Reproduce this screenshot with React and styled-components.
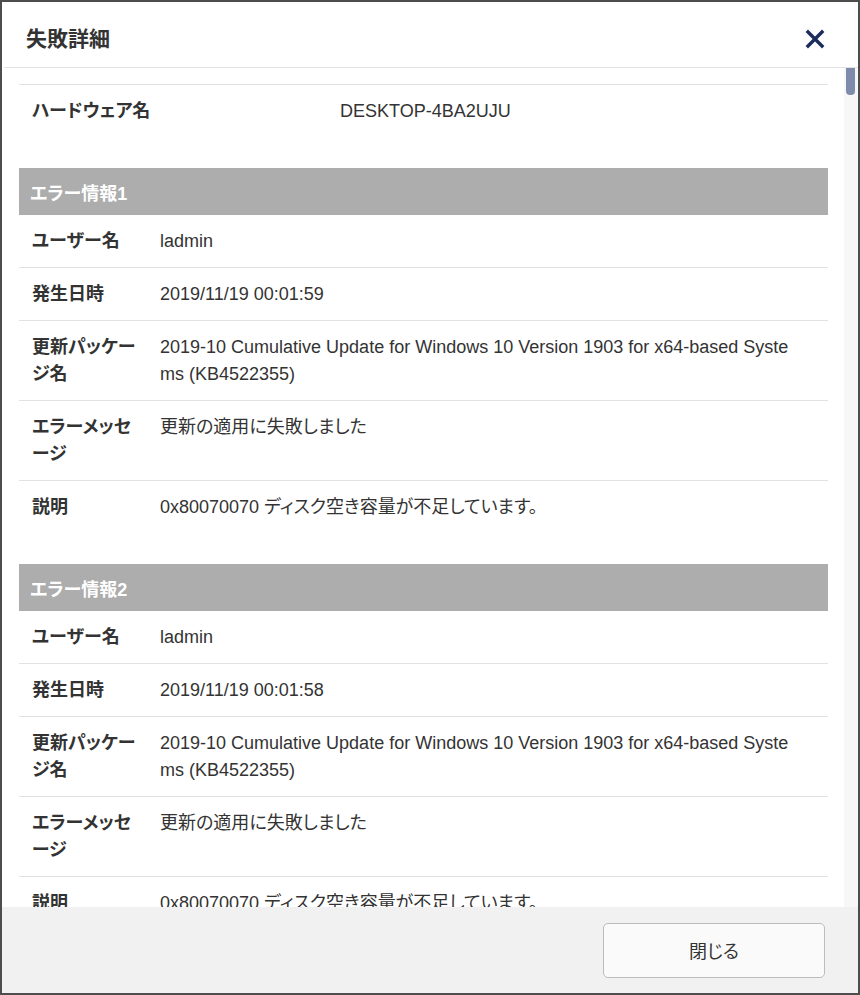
import React from 'react'
import styled, { createGlobalStyle } from 'styled-components'

const GlobalStyle = createGlobalStyle`
  html, body {
    margin: 0;
    padding: 0;
    background: #fff;
  }
  body {
    font-family: "Liberation Sans", "Noto Sans CJK JP", sans-serif;
    font-feature-settings: "palt";
    color: #333;
  }
  * { box-sizing: border-box; }
`;

const Frame = styled.div`
  width: 860px;
  height: 995px;
  border: 2px solid #4d4d4d;
  display: flex;
  flex-direction: column;
  background: #fff;
`;

const Header = styled.div`
  height: 66px;
  flex: none;
  display: flex;
  align-items: center;
  justify-content: space-between;
  padding: 0 31px 0 22px;
  margin-left: 2px;
  border-bottom: 1px solid #e3e3e3;
`;

const Title = styled.h1`
  margin: 0;
  font-size: 21px;
  font-weight: bold;
  color: #333;
  padding-top: 4px;
`;

const CloseButton = styled.button`
  border: 0;
  background: none;
  padding: 0;
  width: 24px;
  height: 24px;
  margin-top: 8px;
  cursor: pointer;
  display: flex;
  align-items: center;
  justify-content: center;
`;

const BodyWrap = styled.div`
  flex: 1;
  min-height: 0;
  display: flex;
`;

const Scroller = styled.div`
  flex: 1;
  min-width: 0;
  overflow-y: auto;
  padding: 16px 16px 0 17px;
  scrollbar-width: none;
  &::-webkit-scrollbar { display: none; }
`;

const Track = styled.div`
  flex: none;
  width: 14px;
  background: #f7f7f7;
  padding: 0 3px 0 2px;
`;

const Thumb = styled.div`
  height: 27px;
  background: #7f8bab;
  border-radius: 0 0 4px 4px;
`;

const Section = styled.section`
  margin-bottom: 31px;
`;

const SectionTitle = styled.div`
  height: 47px;
  display: flex;
  align-items: center;
  padding-left: 11px;
  background: #adadad;
  color: #fff;
  font-size: 18px;
  font-weight: bold;
`;

const Row = styled.div`
  display: flex;
  border-top: ${p => (p.$topLine ? '1px solid #e2e2e2' : '0')};
  border-bottom: ${p => (p.$last ? '0' : '1px solid #e2e2e2')};
  font-size: 18px;
  line-height: 27px;
`;

const Label = styled.div`
  flex: none;
  width: ${p => p.$width}px;
  padding: 13px 22px 12px 13px;
  font-weight: bold;
  color: #333;
`;

const Value = styled.div`
  flex: 1;
  min-width: 0;
  padding: 13px 32px 12px 0;
  color: #333;
  word-break: break-all;
`;

const Footer = styled.div`
  height: 86px;
  flex: none;
  background: #f1f1f1;
  display: flex;
  align-items: center;
  justify-content: flex-end;
  padding-right: 33px;
`;

const FooterButton = styled.button`
  width: 222px;
  height: 55px;
  background: #fafafa;
  border: 1.5px solid #b9bdc0;
  border-radius: 5px;
  font-family: inherit;
  font-feature-settings: "palt";
  font-size: 18px;
  color: #333;
  cursor: pointer;
`;

const errors = [
  { date: '2019/11/19 00:01:59' },
  { date: '2019/11/19 00:01:58' },
  { date: '2019/11/19 00:01:57' }
].map(e => ({
  user: 'ladmin',
  date: e.date,
  pkg: '2019-10 Cumulative Update for Windows 10 Version 1903 for x64-based Systems (KB4522355)',
  message: '更新の適用に失敗しました',
  description: '0x80070070 ディスク空き容量が不足しています。'
}))

const fields = [
  ['user', 'ユーザー名'],
  ['date', '発生日時'],
  ['pkg', '更新パッケージ名'],
  ['message', 'エラーメッセージ'],
  ['description', '説明']
]

const ErrorSection = ({ index, error }) => (
  <Section>
    <SectionTitle>エラー情報{index}</SectionTitle>
    {fields.map(([key, label], i) => (
      <Row key={key} $last={i === fields.length - 1}>
        <Label $width={141}>{label}</Label>
        <Value>{error[key]}</Value>
      </Row>
    ))}
  </Section>
)

const CloseIcon = () => (
  <svg width="20" height="20" viewBox="0 0 20 20">
    <path d="M3 3 L17 17 M17 3 L3 17" stroke="#1c2d5c" strokeWidth="3.4" strokeLinecap="square" />
  </svg>
)

export default function App() {
  return (
    <>
      <GlobalStyle />
      <Frame>
        <Header>
          <Title>失敗詳細</Title>
          <CloseButton aria-label="close">
            <CloseIcon />
          </CloseButton>
        </Header>
        <BodyWrap>
          <Scroller>
            <Section>
              <Row $topLine $last>
                <Label $width={321}>ハードウェア名</Label>
                <Value>DESKTOP-4BA2UJU</Value>
              </Row>
            </Section>
            {errors.map((error, i) => (
              <ErrorSection key={i} index={i + 1} error={error} />
            ))}
          </Scroller>
          <Track>
            <Thumb />
          </Track>
        </BodyWrap>
        <Footer>
          <FooterButton>閉じる</FooterButton>
        </Footer>
      </Frame>
    </>
  )
}
